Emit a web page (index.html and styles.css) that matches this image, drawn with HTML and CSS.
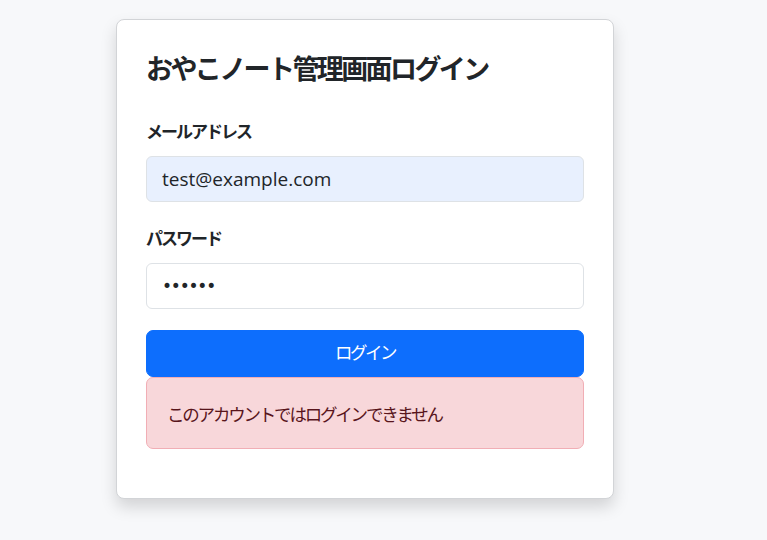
FILE: index.html
```html
<!DOCTYPE html>
<html lang="ja">
<head>
<meta charset="utf-8">
<title>おやこノート管理画面ログイン</title>
<link rel="stylesheet" href="styles.css">
</head>
<body>
<main class="page">
  <section class="card">
    <h1 class="title">おやこノート管理画面ログイン</h1>
    <form class="form">
      <div class="field">
        <label class="label" for="email">メールアドレス</label>
        <input class="input input-autofill" id="email" type="email" value="test@example.com">
      </div>
      <div class="field">
        <label class="label" for="password">パスワード</label>
        <input class="input input-password" id="password" type="password" value="secret">
      </div>
      <button class="btn" type="button">ログイン</button>
      <div class="alert">このアカウントではログインできません</div>
    </form>
  </section>
</main>
</body>
</html>
```
FILE: styles.css
```css
* { box-sizing: border-box; }
html, body { margin: 0; padding: 0; }
body {
  background: #f7f8fa;
  font-family: "Noto Sans", "Noto Sans CJK JP", sans-serif;
  color: #212529;
  width: 767px;
  height: 540px;
  overflow: hidden;
}
.page {
  padding: 19px 0 0 116px;
}
.card {
  width: 498px;
  background: #fff;
  border: 1px solid #d2d4d7;
  border-radius: 8px;
  box-shadow: 0 8px 16px rgba(0, 0, 0, 0.15);
  padding: 29px 29px 49px 29px;
}
.title {
  margin: 0 0 32px 0;
  font-family: "Noto Sans CJK JP", sans-serif;
  font-size: 27px;
  letter-spacing: -2.6px;
  line-height: 38px;
  font-weight: 600;
  color: #212529;
}
.form { display: flex; flex-direction: column; }
.field { display: flex; flex-direction: column; margin-bottom: 21px; }
.field + .field { margin-top: 3px; }
.label {
  font-family: "Noto Sans CJK JP", sans-serif;
  font-size: 17px;
  letter-spacing: -2px;
  line-height: 24px;
  font-weight: 600;
  margin-bottom: 13px;
  color: #212529;
  -webkit-text-stroke: 0;
}
.input {
  height: 46px;
  border: 1px solid #dee2e6;
  border-radius: 6px;
  padding: 0 15px;
  font-family: "Open Sans", "Noto Sans CJK JP", sans-serif;
  font-size: 19px;
  color: #212529;
  background: #fff;
  outline: none;
}
.input-password {
  font-family: "DejaVu Sans", sans-serif;
  font-size: 17px;
  letter-spacing: -1.2px;
  padding-left: 15px;
}
.input-autofill { background: #e8f0fe; }
.btn {
  height: 47px;
  border: 1px solid #0d6efd;
  border-radius: 7px;
  background: #0d6efd;
  color: #fff;
  font-family: "Noto Sans CJK JP", sans-serif;
  font-size: 17.5px;
  letter-spacing: -2.5px;
  line-height: 24px;
  padding: 0 0 3px 0;
  cursor: pointer;
}
.alert {
  height: 72px;
  display: flex;
  align-items: center;
  padding: 0 20px;
  background: #f8d7da;
  border: 1px solid #f1aeb5;
  border-radius: 7px;
  color: #58151c;
  font-family: "Noto Sans CJK JP", sans-serif;
  font-size: 17.5px;
  letter-spacing: -2.2px;
}
```
